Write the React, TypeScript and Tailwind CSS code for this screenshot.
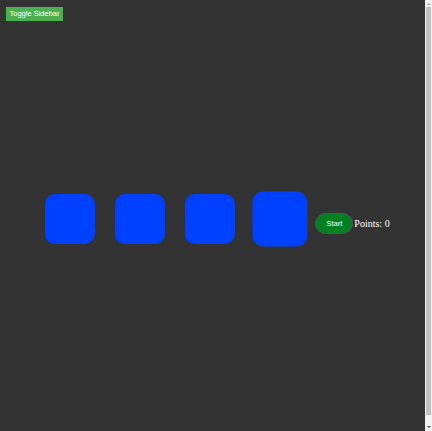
import React, { useState } from "react";

export default function App() {
  const [open, setOpen] = useState(false);
  return (
    <div className="flex h-[431px] w-full overflow-hidden font-[family-name:'Liberation_Sans',Arial,sans-serif] font-normal">
      <div className="flex-1 bg-[#333333]">
        <div className="flex pt-[7px] pl-[6px]">
          <button
            onClick={() => setOpen(!open)}
            className="h-[14px] w-[57px] bg-[#4caf50] text-center text-[7.5px] font-normal leading-[14px] text-white"
          >
            Toggle Sidebar
          </button>
        </div>
        <div className="mt-[163px] flex items-center justify-center">
          <div className="m-[10px] h-[50px] w-[50px] rounded-[10px] bg-[#0040ff]" />
          <div className="m-[10px] h-[50px] w-[50px] rounded-[10px] bg-[#0040ff]" />
          <div className="m-[10px] h-[50px] w-[50px] rounded-[10px] bg-[#0040ff]" />
          <div className="m-[10px] h-[50px] w-[50px] scale-110 rounded-[10px] bg-[#0040ff]" />
          <div className="flex items-center pt-[9px]">
            <button className="h-[21px] w-[38px] rounded-full border border-[#555555] bg-[#008020] text-[7.5px] font-normal text-white">
              Start
            </button>
            <span className="ml-[1px] font-[family-name:'Liberation_Serif','Times_New_Roman',serif] text-[10px] font-normal text-white">
              Points: 0
            </span>
          </div>
        </div>
      </div>
      <div className="flex w-[7px] flex-col bg-[#f1f1f1]">
        <div className="flex h-[7px] items-center justify-center">
          <div className="h-0 w-0 border-x-[2px] border-b-[2px] border-x-transparent border-b-[#a3a3a3]" />
        </div>
        <div className="mx-[1px] flex-1 bg-[#c1c1c1]" />
        <div className="flex h-[16px] items-end justify-center pb-[3px]">
          <div className="h-0 w-0 border-x-[2px] border-t-[2px] border-x-transparent border-t-[#505050]" />
        </div>
      </div>
    </div>
  );
}
